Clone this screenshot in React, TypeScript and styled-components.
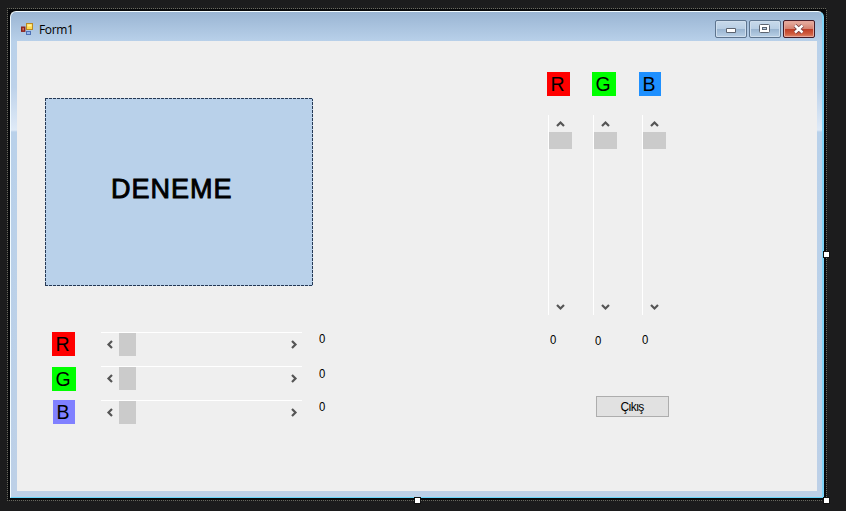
import React from "react";
import styled, { createGlobalStyle } from "styled-components";

const GlobalStyle = createGlobalStyle`
  * { box-sizing: border-box; }
  body { margin: 0; background: #1c1c1d; overflow: hidden; }
`;

const Surface = styled.main`
  width: 846px;
  height: 511px;
  padding: 8px 0 0 7px;
  background: #1c1c1d;
  font-family: "Liberation Sans", Arial, sans-serif;
  color: #000;
`;

const Selection = styled.div`
  position: relative;
  width: 820px;
  height: 493px;
  padding: 3px 2px 2px 3px;
  background:
    repeating-linear-gradient(90deg, #69695f 0 1px, #1c1c1d 1px 2px) 0 0 / 100% 1px no-repeat,
    repeating-linear-gradient(90deg, #69695f 0 1px, #1c1c1d 1px 2px) 0 100% / 100% 1px no-repeat,
    repeating-linear-gradient(#69695f 0 1px, #1c1c1d 1px 2px) 0 0 / 1px 100% no-repeat,
    repeating-linear-gradient(#69695f 0 1px, #1c1c1d 1px 2px) 100% 0 / 1px 100% no-repeat,
    #08090b;
`;

const Handle = styled.i<{ $x: number; $y: number }>`
  position: absolute;
  left: ${(p) => p.$x}px;
  top: ${(p) => p.$y}px;
  width: 5px;
  height: 5px;
  background: #fff;
  outline: 1px solid #111;
`;

const Window = styled.section`
  width: 814px;
  height: 487px;
  padding: 0 5px 5px 6px;
  border: 1px solid #f2fbff;
  border-right: 2px solid #7fd4f8;
  border-bottom-color: #68d6fb;
  border-radius: 6px 6px 0 0;
  background: linear-gradient(#9ab5d3 0, #b9d1ea 30px, #bdd2ea 75px, #dfeaf7 118px, #b9d1ea 120px, #bdd0e7 100%);
`;

const TitleBar = styled.header`
  height: 29px;
  display: flex;
  align-items: flex-start;
  padding: 8px 2px 0 4px;
`;

const Title = styled.span`
  margin: 2px auto 0 4px;
  font: 12px/16px "Open Sans", sans-serif;
  letter-spacing: -0.35px;
`;

const Captions = styled.div`
  display: flex;
  gap: 2px;
`;

const Caption = styled.button<{ $close?: boolean }>`
  width: 32px;
  height: 18px;
  padding: 0;
  display: flex;
  align-items: center;
  justify-content: center;
  border: 1px solid ${(p) => (p.$close ? "#431a25" : "#5d748e")};
  border-radius: 2px;
  box-shadow: inset 0 0 0 1px ${(p) => (p.$close ? "#e6a69b" : "#cfdeed")};
  background: ${(p) =>
    p.$close
      ? "linear-gradient(#e3a698 0 2px, #d58270 48%, #bd3c25 50%, #cf5b3e 80%, #dc886c)"
      : "linear-gradient(#c4d7e9 0 2px, #b8cee4 48%, #98b3cf 50%, #b9d0e6)"};
`;

const Client = styled.div`
  width: 800px;
  height: 450px;
  display: flex;
  background: #efefef;
`;

const LeftSide = styled.div`
  width: 530px;
  flex: none;
  padding: 57px 0 0 28px;
`;

const Preview = styled.div`
  width: 268px;
  height: 188px;
  padding: 76px 0 0 66px;
  margin-bottom: 46px;
  font-size: 27px;
  line-height: 30px;
  letter-spacing: 1px;
  -webkit-text-stroke: 0.9px #000;
  background:
    repeating-linear-gradient(90deg, #263955 0 3px, #b9d1ea 3px 4px) 0 0 / 100% 1px no-repeat,
    repeating-linear-gradient(90deg, #263955 0 3px, #b9d1ea 3px 4px) 0 100% / 100% 1px no-repeat,
    repeating-linear-gradient(#263955 0 3px, #b9d1ea 3px 4px) 0 0 / 1px 100% no-repeat,
    repeating-linear-gradient(#263955 0 3px, #b9d1ea 3px 4px) 100% 0 / 1px 100% no-repeat,
    #b9d1ea;
`;

const ChannelRow = styled.div`
  height: 34px;
  display: grid;
  grid-template-columns: 49px 218px auto;
  align-items: start;
  margin-left: 7px;
`;

const Tag = styled.span<{ $color: string; $w: number; $left?: number; $top?: number }>`
  display: block;
  width: ${(p) => p.$w}px;
  height: 24px;
  margin: ${(p) => p.$top ?? 0}px 0 0 ${(p) => p.$left ?? 0}px;
  padding-left: 3.5px;
  background: ${(p) => p.$color};
  font-size: 19.5px;
  line-height: 25px;
`;

const HTrack = styled.div`
  width: 201px;
  height: 24px;
  display: flex;
  align-items: center;
  border-top: 1px solid #fff;
`;

const VTrack = styled.div`
  width: 24px;
  height: 200px;
  display: flex;
  flex-direction: column;
  align-items: center;
  border-left: 1px solid #fff;
`;

const ArrowBox = styled.span<{ $vertical?: boolean }>`
  flex: none;
  display: flex;
  align-items: center;
  justify-content: center;
  width: ${(p) => (p.$vertical ? 23 : 18)}px;
  height: ${(p) => (p.$vertical ? 17 : 23)}px;
`;

const Thumb = styled.span<{ $vertical?: boolean }>`
  width: ${(p) => (p.$vertical ? 23 : 17)}px;
  height: ${(p) => (p.$vertical ? 17 : 23)}px;
  background: #cbcbcb;
`;

const Spacer = styled.span`
  flex: 1;
`;

const Value = styled.span<{ $top?: number; $left?: number }>`
  display: block;
  width: 8px;
  margin: ${(p) => p.$top ?? 0}px 0 0 ${(p) => p.$left ?? 0}px;
  font-size: 13.5px;
  line-height: 13px;
  transform: scaleX(0.84);
  transform-origin: 0 50%;
`;

const RightSide = styled.div`
  padding-top: 31px;
`;

const Columns = styled.div`
  display: grid;
  grid-template-columns: 45px 49px 40px;
  height: 324px;
`;

const Column = styled.div<{ $gap: number }>`
  ${VTrack} { margin: 19px 0 0 ${(p) => p.$gap}px; }
`;

const ExitButton = styled.button`
  display: block;
  width: 73px;
  height: 21px;
  margin-left: 49px;
  padding: 1px 1px 0 0;
  border: 1px solid #adadad;
  background: #e1e1e1;
  font: 12px/16px "Liberation Sans", Arial, sans-serif;
  letter-spacing: -0.9px;
  color: #000;
`;

const arrowPaths = {
  left: "M6 1 2.5 4.5 6 8",
  right: "M3 1 6.5 4.5 3 8",
  up: "M1 7 4.5 3.5 8 7",
  down: "M1 3 4.5 6.5 8 3",
};

function Arrow({ dir }: { dir: keyof typeof arrowPaths }) {
  return (
    <ArrowBox $vertical={dir === "up" || dir === "down"}>
      <svg width="9" height="9" viewBox="0 0 9 9">
        <path d={arrowPaths[dir]} fill="none" stroke="#555" strokeWidth="2.2" />
      </svg>
    </ArrowBox>
  );
}

function FormIcon() {
  return (
    <svg width="14" height="15" viewBox="0 -2 14 15">
      <rect x=".7" y="5.2" width="3" height="4" fill="#ce6b56" stroke="#8b211a" strokeWidth="1.4" />
      <rect x="5.5" y="1.5" width="6" height="6" fill="#ffdb4e" stroke="#ba8923" />
      <path d="M6.5 2.5h4v2h-4z" fill="#fff1a0" />
      <rect x="5.5" y="9.5" width="4" height="3" fill="#94b6ee" stroke="#4d70b5" />
    </svg>
  );
}

const rows = [
  { name: "R", color: "#ff0000", width: 23, left: 0, top: 0, valueTop: 0 },
  { name: "G", color: "#00ff00", width: 24, left: 0, top: 1, valueTop: 1 },
  { name: "B", color: "#8080ff", width: 22, left: 1, top: 0, valueTop: 0 },
];

const columns = [
  { name: "R", color: "#ff0000", width: 23, left: 0, trackLeft: 1, valueTop: 18, valueLeft: 3 },
  { name: "G", color: "#00ff00", width: 24, left: 0, trackLeft: 1, valueTop: 19, valueLeft: 3 },
  { name: "B", color: "#1e90ff", width: 22, left: -2, trackLeft: 1, valueTop: 18, valueLeft: 1 },
];

export default function App() {
  return (
    <Surface>
      <GlobalStyle />
      <Selection>
        <Window>
          <TitleBar>
            <FormIcon />
            <Title>Form1</Title>
            <Captions>
              <Caption aria-label="Minimize">
                <svg width="12" height="10" viewBox="0 0 12 10">
                  <path d="M1.5 4.5h9v4h-9z" fill="#fff" stroke="#5c6470" />
                </svg>
              </Caption>
              <Caption aria-label="Maximize">
                <svg width="12" height="10" viewBox="0 0 12 10">
                  <rect x=".5" y=".5" width="10" height="8" rx="1" fill="#fff" stroke="#5c6470" />
                  <rect x="3.5" y="3.5" width="4" height="2" fill="#b6cce1" stroke="#5c6470" />
                </svg>
              </Caption>
              <Caption $close aria-label="Close">
                <svg width="12" height="10" viewBox="0 0 12 10">
                  <path d="m2 1.5 7.5 7m0-7-7.5 7" fill="none" stroke="#713c40" strokeWidth="4" />
                  <path d="m2 1.5 7.5 7m0-7-7.5 7" fill="none" stroke="#fff" strokeWidth="2.4" />
                </svg>
              </Caption>
            </Captions>
          </TitleBar>
          <Client>
            <LeftSide>
              <Preview>DENEME</Preview>
              {rows.map((r) => (
                <ChannelRow key={r.name}>
                  <Tag $color={r.color} $w={r.width} $left={r.left} $top={r.top}>{r.name}</Tag>
                  <HTrack>
                    <Arrow dir="left" />
                    <Thumb />
                    <Spacer />
                    <Arrow dir="right" />
                  </HTrack>
                  <Value $top={r.valueTop}>0</Value>
                </ChannelRow>
              ))}
            </LeftSide>
            <RightSide>
              <Columns>
                {columns.map((c) => (
                  <Column key={c.name} $gap={c.trackLeft}>
                    <Tag $color={c.color} $w={c.width} $left={c.left}>{c.name}</Tag>
                    <VTrack>
                      <Arrow dir="up" />
                      <Thumb $vertical />
                      <Spacer />
                      <Arrow dir="down" />
                    </VTrack>
                    <Value $top={c.valueTop} $left={c.valueLeft}>0</Value>
                  </Column>
                ))}
              </Columns>
              <ExitButton>Çıkış</ExitButton>
            </RightSide>
          </Client>
        </Window>
        <Handle $x={817} $y={244} />
        <Handle $x={408} $y={490} />
        <Handle $x={817} $y={490} />
      </Selection>
    </Surface>
  );
}
